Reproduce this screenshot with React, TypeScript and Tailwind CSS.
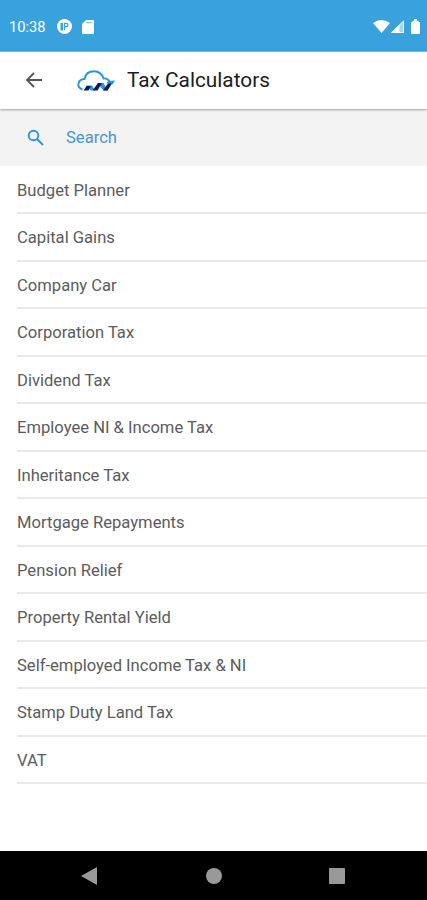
const calculators = [
  "Budget Planner",
  "Capital Gains",
  "Company Car",
  "Corporation Tax",
  "Dividend Tax",
  "Employee NI & Income Tax",
  "Inheritance Tax",
  "Mortgage Repayments",
  "Pension Relief",
  "Property Rental Yield",
  "Self-employed Income Tax & NI",
  "Stamp Duty Land Tax",
  "VAT",
];

function StatusBar() {
  return (
    <div className="flex h-[51px] shrink-0 items-center bg-[#39a2dc] pt-[2px] pl-[9px] text-white">
      <span className="w-[37px] pt-px text-[14.7px] leading-none whitespace-nowrap">10:38</span>
      <svg className="ml-[11px] h-[15px] w-[15px]" viewBox="0 0 15 15">
        <circle cx="7.5" cy="7.5" r="7.5" fill="#fff" />
        <path d="M3.500 4h2.500v7.500H3.500z" fill="#39a2dc" />
        <path d="M7.500 11V4.300h1.700a1.700 1.700 0 0 1 0 3.400H7.500" fill="none" stroke="#39a2dc" strokeWidth="1.300" />
      </svg>
      <svg className="ml-[10px] h-[14px] w-[12px]" viewBox="0 0 12 14">
        <path d="M4 0h7q1 0 1 1v12q0 1-1 1H1q-1 0-1-1V4z" fill="#fff" />
        <path d="M4.500 2h5.500v1.300H4.500z" fill="#39a2dc" fillOpacity=".6" />
      </svg>
      <svg className="ml-auto h-[13px] w-[17px]" viewBox="0 0 17 13">
        <path d="M0 3Q8.500-3 17 3L8.500 13z" fill="#fff" />
      </svg>
      <svg className="ml-[1px] h-[13px] w-[13px]" viewBox="0 0 13 13">
        <path d="M13 0v13H0z" fill="#fff" fillOpacity=".55" />
        <path d="M8.500 4.500V13H0z" fill="#fff" />
        <path d="M12.500 1v11.500H1z" fill="none" stroke="#fff" strokeOpacity=".8" />
      </svg>
      <svg className="mr-[7px] ml-[7px] h-[15px] w-[9px]" viewBox="0 0 9 15">
        <path d="M3 0h3v1.500l3 2V14q0 1-1 1H1q-1 0-1-1V3.500l3-2z" fill="#fff" />
      </svg>
    </div>
  );
}

function CloudLogo() {
  return (
    <svg className="ml-[34px] h-[22px] w-[38px]" viewBox="0 0 38 22">
      <path
        d="M5.500 19.500C-1 17 .5 9.500 7.500 9C8.500 4 12 1.300 17 1.300C22 1.300 25 4 26.500 8.500C29 8 31 9 32.500 11.500"
        fill="none"
        stroke="#2697d5"
        strokeWidth="1.900"
      />
      <path d="M9 15.500h6l3 5h-4zM20 13h6.500l4 7.500h-4z" fill="#2697d5" />
      <path
        d="M6.500 20.500l3-4.500h4.500l-2.500 4.500zM15.500 20.500l5.500-7.500h4l-4.500 7.500zM26 20.500l6-8.500h4l-5.500 8.500z"
        fill="#11195a"
      />
      <path d="M29.500 13.500l1.500-2.500 7-.5-2.500 4-1.500-1z" fill="#2697d5" />
    </svg>
  );
}

function Header() {
  return (
    <header className="relative flex h-[58px] shrink-0 items-center border-t border-[#79bde3] bg-white pl-[25px] shadow-[0_1px_2px_rgba(0,0,0,0.35)]">
      <svg className="-mt-px h-[18px] w-[18px]" viewBox="0 0 18 18" fill="none" stroke="#555" strokeWidth="1.800">
        <path d="M17 9H2.500M9 2L2 9L9 16" />
      </svg>
      <CloudLogo />
      <h1 className="ml-[12px] text-[20.8px] leading-none font-normal whitespace-nowrap text-[#1c1c1c]">Tax Calculators</h1>
    </header>
  );
}

function SearchBar() {
  return (
    <div className="flex h-[57px] shrink-0 items-center bg-[#f3f3f3] pl-[27px] text-[#4596d3]">
      <svg className="h-[17px] w-[17px]" viewBox="0 0 17 17" fill="none" stroke="#2f96d7" strokeWidth="1.900">
        <circle cx="6.500" cy="6.500" r="4.800" />
        <path d="M10 10l6 6" />
      </svg>
      <span className="ml-[22px] pt-[2px] text-[16.600px] leading-none">Search</span>
    </div>
  );
}

function NavBar() {
  return (
    <nav className="mt-auto flex h-[49px] shrink-0 items-center justify-between bg-black pr-[82px] pl-[81px]">
      <svg className="h-[18px] w-[16px]" viewBox="0 0 16 18">
        <path d="M16 0v18L0 9z" fill="#999" />
      </svg>
      <div className="ml-px h-4 w-4 rounded-full bg-[#999]" />
      <div className="h-4 w-4 rounded-[1px] bg-[#999]" />
    </nav>
  );
}

export default function App() {
  return (
    <div className="flex h-[900px] w-[427px] flex-col overflow-hidden bg-white font-[Roboto,sans-serif]">
      <StatusBar />
      <Header />
      <SearchBar />
      <ul className="pt-[0.8px] pl-[17px]">
        {calculators.map((name) => (
          <li
            key={name}
            className="flex h-[47.5px] items-center border-b-2 border-[#e8e9eb] pt-[3px] text-[16.600px] text-[#5c5c5c]"
          >
            {name}
          </li>
        ))}
      </ul>
      <NavBar />
    </div>
  );
}
